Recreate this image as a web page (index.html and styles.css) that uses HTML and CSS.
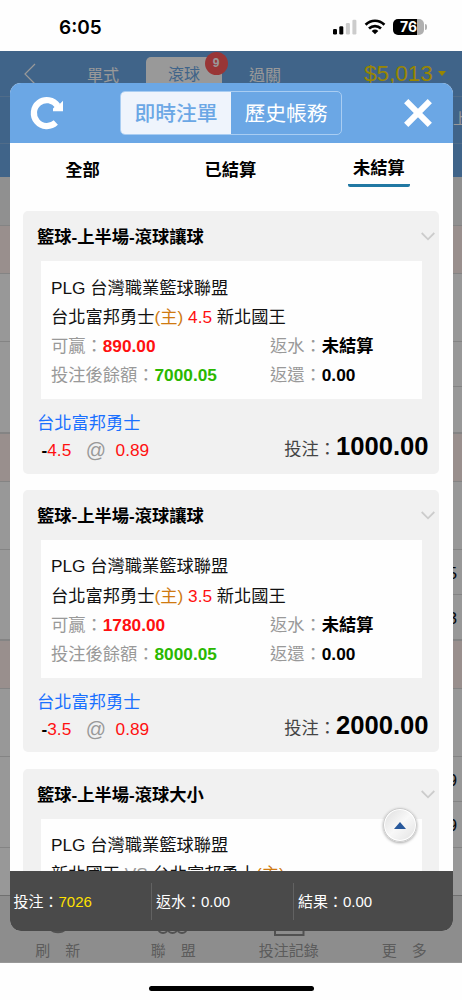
FILE: index.html
```
<!DOCTYPE html>
<html lang="zh-Hant">
<head>
    <meta charset="UTF-8">
    <meta name="viewport" content="width=device-width, initial-scale=1.0">
    <title>即時注單</title>
    <link rel="stylesheet" href="styles.css">
</head>
<body>
    <div class="status-bar">
        <span class="status-time">6:05</span>
        <div class="status-icons">
            <svg width="24" height="16" viewBox="0 0 24 16">
                <rect x="0" y="10" width="4" height="5.5" rx="1.2" fill="#000"/>
                <rect x="6.3" y="7.3" width="4" height="8.2" rx="1.2" fill="#000"/>
                <rect x="12.9" y="4" width="4" height="11.5" rx="1.2" fill="#ccc"/>
                <rect x="19.4" y="0.8" width="4" height="14.7" rx="1.2" fill="#ccc"/>
            </svg>
            <svg class="wifi" width="22" height="16" viewBox="0 0 22 16" fill="none" stroke="#000" stroke-width="2.7">
                <path d="M1.6 5.7 C7 .4 15 .4 20.4 5.7"/>
                <path d="M5 9.5 C8.5 6.2 13.5 6.2 17 9.5"/>
                <path d="M7.7 11.9 Q11 9.2 14.3 11.9 L11 15.3 Z" fill="#000" stroke="none"/>
            </svg>
            <div class="battery"><span>76</span></div>
        </div>
    </div>

    <div class="app">
        <div class="page">
            <header class="page-header">
                <div class="top-nav">
                    <svg class="back" width="12" height="22" viewBox="0 0 12 22" fill="none" stroke="#fff" stroke-width="1.2">
                        <path d="M11 1 L1 11 L11 21"/>
                    </svg>
                    <span class="mode">單式</span>
                    <span class="mode mode-active">滾球<b class="badge">9</b></span>
                    <span class="mode">過關</span>
                    <span class="balance">$5,013</span>
                </div>
                <div class="sub-nav"><span>上</span></div>
            </header>
            <div class="page-title"></div>
            <div class="league"></div>
            <div class="match match-head"><i></i></div>
            <div class="match"><span></span><span></span></div>
            <div class="league"></div>
            <div class="match match-head"><i></i></div>
            <div class="match"><span>5</span><span>3</span></div>
            <div class="league"></div>
            <div class="match match-head"><i></i></div>
            <div class="match"><span>9</span><span>9</span></div>
            <nav class="bottom-nav">
                <div>
                    <svg width="32" height="32" viewBox="0 0 32 32" fill="none" stroke="#888" stroke-width="2.5"><circle cx="16" cy="17" r="11"/></svg>
                    <span>刷　新</span>
                </div>
                <div>
                    <svg width="32" height="32" viewBox="0 0 32 32" fill="none" stroke="#888" stroke-width="2"><circle cx="6" cy="24" r="5"/><circle cx="15.500" cy="24" r="5"/><circle cx="25" cy="24" r="5"/></svg>
                    <span>聯　盟</span>
                </div>
                <div>
                    <svg width="32" height="32" viewBox="0 0 32 32" fill="none" stroke="#888" stroke-width="2"><path d="M2 2 H30.500 V31 H2 Z"/></svg>
                    <span>投注記錄</span>
                </div>
                <div>
                    <svg width="32" height="32" viewBox="0 0 32 32" fill="#888"><circle cx="6" cy="16" r="3"/><circle cx="16" cy="16" r="3"/><circle cx="26" cy="16" r="3"/></svg>
                    <span>更　多</span>
                </div>
            </nav>
        </div>

        <div class="overlay"></div>

        <section class="modal">
            <header class="modal-header">
                <svg class="refresh" width="34" height="34" viewBox="0 0 34 34">
                    <path d="M25.800 26.600 A13 13 0 1 1 27.600 9.800" fill="none" stroke="#fff" stroke-width="6.200"/>
                    <path d="M33 4.800 V15.200 H23 V12.500 L26 9.500 L29.500 8.300 Z" fill="#fff"/>
                </svg>
                <div class="segment">
                    <span class="segment-on">即時注單</span>
                    <span>歷史帳務</span>
                </div>
                <svg class="close" width="28" height="28" viewBox="0 0 28 28" stroke="#fff" stroke-width="6">
                    <path d="M2.200 2.200 L25.800 25.800 M25.800 2.200 L2.200 25.800"/>
                </svg>
            </header>

            <div class="tabs">
                <span>全部</span>
                <span>已結算</span>
                <span class="tab-active">未結算</span>
            </div>

            <div class="bets">
                <article class="bet">
                    <h2>籃球-上半場-滾球讓球
                        <svg width="14" height="9" viewBox="0 0 14 9" fill="none" stroke="#ccc" stroke-width="1.8"><path d="M.7 1 L7 7.3 L13.3 1"/></svg>
                    </h2>
                    <div class="detail">
                        <p>PLG 台灣職業籃球聯盟</p>
                        <p>台北富邦勇士<span class="home">(主)</span> <span class="red">4.5</span> 新北國王</p>
                        <div class="pair">
                            <p>可贏：<b class="red">890.00</b></p>
                            <p>返水：<b>未結算</b></p>
                        </div>
                        <div class="pair">
                            <p>投注後餘額：<b class="green">7000.05</b></p>
                            <p>返還：<b>0.00</b></p>
                        </div>
                    </div>
                    <div class="summary">
                        <div>
                            <p class="pick">台北富邦勇士</p>
                            <p class="odds"><b>-</b>4.5<span class="at">@</span>0.89</p>
                        </div>
                        <p class="stake">投注：<b>1000.00</b></p>
                    </div>
                </article>

                <article class="bet">
                    <h2>籃球-上半場-滾球讓球
                        <svg width="14" height="9" viewBox="0 0 14 9" fill="none" stroke="#ccc" stroke-width="1.8"><path d="M.7 1 L7 7.3 L13.3 1"/></svg>
                    </h2>
                    <div class="detail">
                        <p>PLG 台灣職業籃球聯盟</p>
                        <p>台北富邦勇士<span class="home">(主)</span> <span class="red">3.5</span> 新北國王</p>
                        <div class="pair">
                            <p>可贏：<b class="red">1780.00</b></p>
                            <p>返水：<b>未結算</b></p>
                        </div>
                        <div class="pair">
                            <p>投注後餘額：<b class="green">8000.05</b></p>
                            <p>返還：<b>0.00</b></p>
                        </div>
                    </div>
                    <div class="summary">
                        <div>
                            <p class="pick">台北富邦勇士</p>
                            <p class="odds"><b>-</b>3.5<span class="at">@</span>0.89</p>
                        </div>
                        <p class="stake">投注：<b>2000.00</b></p>
                    </div>
                </article>

                <article class="bet">
                    <h2>籃球-上半場-滾球大小
                        <svg width="14" height="9" viewBox="0 0 14 9" fill="none" stroke="#ccc" stroke-width="1.8"><path d="M.7 1 L7 7.3 L13.3 1"/></svg>
                    </h2>
                    <div class="detail">
                        <p>PLG 台灣職業籃球聯盟</p>
                        <p>新北國王 <span class="vs">VS</span> 台北富邦勇士<span class="home">(主)</span></p>
                    </div>
                </article>
            </div>

            <button class="to-top" aria-label="回頂部"></button>

            <footer class="totals">
                <span>投注：<em>7026</em></span>
                <span>返水：0.00</span>
                <span>結果：0.00</span>
            </footer>
        </section>
    </div>

    <div class="home-bar"><i></i></div>
</body>
</html>
```
FILE: styles.css
```
* {
    margin: 0;
    padding: 0;
    box-sizing: border-box;
}

body {
    width: 462px;
    height: 1000px;
    overflow: hidden;
    background: #fefefe;
    color: #111;
    font-family: "Liberation Sans", "Noto Sans CJK TC", sans-serif;
    font-size: 17.25px;
}

/* phone status bar */
.status-bar {
    display: flex;
    justify-content: space-between;
    height: 51px;
    padding: 0 38px 0 59px;
}

.status-time {
    padding-top: 4px;
    font-family: Inter, sans-serif;
    font-size: 19px;
    font-weight: 600;
    line-height: 48px;
    color: #000;
}

.status-icons {
    display: flex;
    padding-top: 19px;
}

.wifi {
    margin: 0 7px 0 7px;
}

.battery {
    position: relative;
    width: 31px;
    height: 16px;
    border-radius: 5px;
    background: linear-gradient(90deg, #000 24px, #b0b0b0 24px);
    color: #fff;
    font: bold 14px/16.5px Inter, sans-serif;
    text-align: center;
}

.battery::after {
    content: "";
    position: absolute;
    right: -3px;
    top: 5px;
    width: 2px;
    height: 6px;
    border-radius: 0 2px 2px 0;
    background: #b0b0b0;
}

/* page under the dialog */
.app {
    position: relative;
    height: 912px;
}

.page {
    height: 912px;
    overflow: hidden;
    background: #fdfdfd;
}

.page-header {
    height: 126px;
    background: #6ca7e4;
    color: #fff;
}

.top-nav {
    display: flex;
    align-items: center;
    height: 46px;
    padding-left: 24px;
    border-bottom: 1px solid #86b5e5;
    font-size: 16px;
}

.back {
    margin-right: 29px;
}

.mode {
    width: 76px;
    text-align: center;
}

.mode-active {
    position: relative;
    height: 40px;
    margin: 6px 5px 0 5px;
    border-radius: 5px 5px 0 0;
    background: #fff;
    color: #6ca7e4;
    line-height: 35px;
}

.badge {
    position: absolute;
    top: -5px;
    right: -5.5px;
    width: 23px;
    height: 23px;
    border-radius: 50%;
    background: #ff5a5a;
    color: #fff;
    font-size: 12px;
    line-height: 23px;
}

.balance {
    display: flex;
    align-items: center;
    margin-left: 61px;
    color: #ffe000;
    font-size: 22.5px;
}

.balance::after {
    content: "";
    margin-left: 5px;
    border: 4.5px solid transparent;
    border-top: 5px solid #ffe000;
    border-bottom: 0;
}

.sub-nav {
    height: 47px;
    padding-left: 453px;
    border-bottom: 1px solid #86b5e5;
    font-size: 15px;
    line-height: 43px;
    white-space: nowrap;
}

.page-title {
    height: 48px;
    background: #f1f1f1;
}

.league {
    height: 49px;
    border: solid #ddd;
    border-width: 1px 0;
    background: #ffeeec;
}

.match {
    display: grid;
    grid-template-rows: 45px 46px;
    height: 90.5px;
    border-bottom: 1px solid #ddd;
    text-align: right;
    line-height: 46px;
}

.match span {
    padding-right: 5px;
    margin-left: 346px;
}

.match span:first-child {
    border-bottom: 1px solid #ddd;
}

.match-head {
    display: block;
    height: 68px;
    padding: 12px 9px 0 0;
}

.match-head i {
    display: block;
    height: 45px;
    border-right: 1px solid #b9ddd0;
}

.bottom-nav {
    display: grid;
    grid-template-columns: repeat(4, 1fr);
    height: 67px;
    margin-top: 47px;
    border-top: 1px solid #bbb;
    background: #ececec;
    color: #999;
    font-size: 15px;
    text-align: center;
}

.bottom-nav svg {
    display: block;
    margin: 8px auto 0;
}

.bottom-nav span {
    display: block;
    line-height: 29px;
}

.overlay {
    position: absolute;
    inset: 0;
    background: rgba(0, 0, 0, 0.4);
}

/* dialog */
.modal {
    position: absolute;
    left: 9.5px;
    top: 32px;
    display: flex;
    flex-direction: column;
    width: 443px;
    height: 848px;
    overflow: hidden;
    border-radius: 11px;
    background: #fefefe;
}

.modal-header {
    display: flex;
    align-items: center;
    justify-content: space-between;
    flex: none;
    height: 60px;
    padding: 0 20.5px;
    background: #6ba7e5;
}

.segment {
    display: flex;
    width: 222px;
    height: 44px;
    margin: 0 1px 0 -5px;
    overflow: hidden;
    border: 1px solid #a9cdf2;
    border-radius: 5px;
    color: #fff;
    font-size: 20.8px;
    line-height: 43px;
    text-align: center;
}

.segment span {
    flex: 1;
}

.segment .segment-on {
    background: #eff4fc;
    color: #6ba7e5;
    font-weight: 500;
}

.tabs {
    display: grid;
    grid-template-columns: repeat(3, 1fr);
    flex: none;
    justify-items: center;
    height: 68px;
    margin-left: -1px;
    color: #000;
    font-weight: bold;
    line-height: 55px;
}

.tab-active {
    width: 62px;
    height: 44px;
    margin-left: 1px;
    border-bottom: 3px solid #2178a3;
    border-radius: 2px;
    line-height: 51px;
    text-align: center;
}

.bets {
    flex: 1;
    min-height: 0;
    overflow: hidden;
    padding: 0 13.5px;
}

.bet {
    height: 262.5px;
    margin-bottom: 16.3px;
    padding: 0 17.5px;
    border-radius: 5px;
    background: #f1f1f1;
}

.bet h2 {
    display: flex;
    align-items: center;
    justify-content: space-between;
    height: 50px;
    margin: 0 -13px 0 -3.5px;
    padding-bottom: 1px;
    color: #000;
    font-size: 17.25px;
}

.bet h2 svg {
    margin-top: 2px;
}

.detail {
    height: 138px;
    padding: 12.5px 10.5px 10px;
    background: #fefefe;
    line-height: 29.25px;
}

.pair {
    display: grid;
    grid-template-columns: 219px 1fr;
    color: #999;
}

.pair b {
    color: #000;
}

.red,
.pair .red {
    color: #ff1010;
}

.green,
.pair .green {
    color: #2ab800;
}

.home {
    color: #cf7a10;
}

.vs {
    color: #999;
}

.summary {
    display: flex;
    justify-content: space-between;
    margin: 0 -7px 0 -3.5px;
    padding-top: 9px;
}

.pick {
    color: #1a70ff;
    line-height: 30px;
}

.odds {
    display: flex;
    align-items: center;
    height: 25px;
    padding-left: 4.5px;
    color: #ff1010;
}

.odds b {
    color: #000;
}

.at {
    margin: 0 9.5px 0 14.5px;
    color: #999;
    font-size: 20px;
}

.stake {
    padding-top: 19px;
    color: #444;
    line-height: 38px;
}

.stake b {
    color: #000;
    font-size: 25.6px;
}

.to-top {
    position: absolute;
    left: 373px;
    top: 725px;
    display: flex;
    align-items: center;
    justify-content: center;
    width: 34px;
    height: 34px;
    border: 1px solid #ccc;
    border-radius: 50%;
    background: linear-gradient(135deg, #ddd, #f8f8f8 50%, #e2e2e2);
    box-shadow: 0 1px 3px rgba(0, 0, 0, 0.35), inset 0 0 0 1px #fff;
}

.to-top::before {
    content: "";
    border: 6.5px solid transparent;
    border-top: 0;
    border-bottom: 7px solid #29599c;
}

.totals {
    display: grid;
    grid-template-columns: 141.5px 142px 1fr;
    align-items: center;
    flex: none;
    height: 60px;
    background: #4a4a4a;
    color: #fff;
    font-size: 15px;
    line-height: 37px;
}

.totals span {
    padding-left: 4px;
}

.totals span + span {
    border-left: 1px solid #626262;
}

.totals em {
    color: #ffe000;
    font-style: normal;
}

.home-bar {
    display: flex;
    justify-content: center;
    padding-top: 23px;
}

.home-bar i {
    width: 165px;
    height: 5px;
    border-radius: 3px;
    background: #000;
}
```
